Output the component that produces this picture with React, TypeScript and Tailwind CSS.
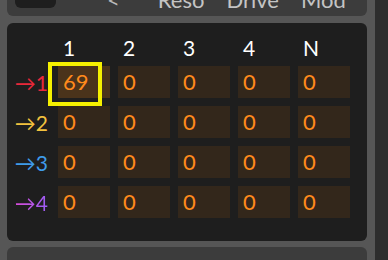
import React from "react";

// --- linhas da matriz de modulação ---
interface Row {
  label: string;
  color: string;
  values: number[];
}

const rows: Row[] = [
  { label: "→1", color: "text-[#e8283a]", values: [69, 0, 0, 0, 0] },
  { label: "→2", color: "text-[#f2c23e]", values: [0, 0, 0, 0, 0] },
  { label: "→3", color: "text-[#3f9bea]", values: [0, 0, 0, 0, 0] },
  { label: "→4", color: "bg-gradient-to-r from-[#d84ad8] to-[#9a5cf5] bg-clip-text text-transparent", values: [0, 0, 0, 0, 0] },
];

const headers = ["1", "2", "3", "4", "N"];

export default function App() {
  return (
    <div className="w-[388px] h-[260px] flex bg-[#2d2d2d] overflow-hidden" style={{ fontFamily: "Lato, 'Open Sans', sans-serif" }}>
      <div className="w-[375px] h-full bg-[#565656] flex flex-col pl-[7px] pr-[8px]">
        {/* painel de cima, cortado */}
        <div className="h-[16px] shrink-0 bg-[#3c3c3c] rounded-b-[6px] overflow-hidden">
          <div className="flex items-start h-full w-full">
            <div className="ml-[8px] w-[41px] h-[8px] bg-[#1e1e1e] rounded-b-[6px]" />
            <span className="ml-[51px] -mt-[10px] text-[22px] leading-[20px] text-[#b9b9b9]">&lt;</span>
            <div className="ml-[38px] -mt-[10px] flex gap-[22px] text-[22px] leading-[20px] text-[#c4c4c4]">
              <span>Reso</span>
              <span>Drive</span>
              <span>Mod</span>
            </div>
          </div>
        </div>

        {/* matriz */}
        <div className="mt-[7px] h-[218px] shrink-0 bg-[#1e1e1e] rounded-[6px] pt-[14px]">
          <div className="grid grid-cols-[43px_repeat(5,52px)] gap-x-2 gap-y-2">
            <div />
            {headers.map((h) => (
              <div key={h} className="h-[21px] pl-[5px] text-[21px] leading-[21px] text-white">{h}</div>
            ))}
            {rows.map((row, r) => (
              <React.Fragment key={row.label}>
                <div className="h-[32px] flex items-center justify-end pr-[2px] text-[21px] leading-none">
                  <span className={row.color}>{row.label}</span>
                </div>
                {row.values.map((v, c) => (
                  <div
                    key={c}
                    className={`relative h-[32px] flex items-center pl-[5px] text-[22px] leading-none text-[#ff8a1c] ${r === 0 && c === 0 ? "bg-[#4a331b]" : "bg-[#33271b]"}`}
                  >
                    {v}
                    {r === 0 && c === 0 && (
                      <div className="absolute left-[-10px] top-[-4px] w-[54px] h-[44px] border-4 border-[#f5f000]" />
                    )}
                  </div>
                ))}
              </React.Fragment>
            ))}
          </div>
        </div>

        {/* painel de baixo */}
        <div className="mt-[6px] flex-1 bg-[#3c3c3c] rounded-t-[6px]" />
      </div>
    </div>
  );
}
